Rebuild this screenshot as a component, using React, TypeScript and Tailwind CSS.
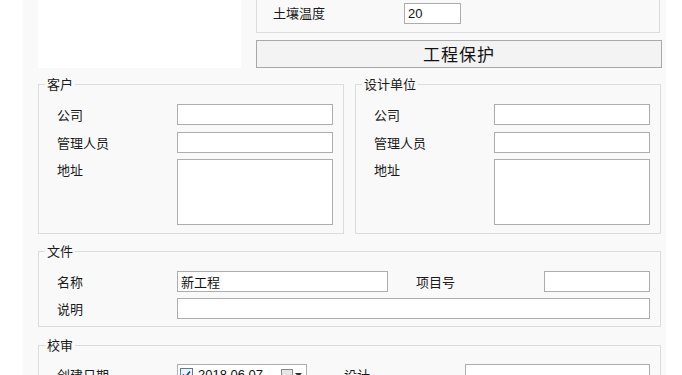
import React from "react";

const font = { fontFamily: '"Noto Sans CJK SC", "Noto Sans", sans-serif' };

function Input({ w, h = 21, value }: { w: number; h?: number; value?: string }) {
  return (
    <div
      className="bg-white border border-[#adadad] text-[13px] leading-[19px] text-[#111] pl-[3px] shrink-0"
      style={{ width: w, height: h }}
    >
      {value}
    </div>
  );
}

function Label({ children, w }: { children: React.ReactNode; w?: number }) {
  return (
    <div className="text-[13px] leading-[16px] text-[#1a1a1a] pt-[3px] shrink-0" style={w ? { width: w } : undefined}>
      {children}
    </div>
  );
}

function Group({ title, className, children }: { title: string; className?: string; children: React.ReactNode }) {
  return (
    <fieldset className={"border border-[#dcdcdc] " + (className ?? "")}>
      <legend className="-ml-[12px] px-[2px] text-[13px] leading-[16px] text-[#1a1a1a]">{title}</legend>
      {children}
    </fieldset>
  );
}

function PartyGroup({ title }: { title: string }) {
  return (
    <Group title={title} className="w-[306px] pt-[12px] pb-[8px] pl-[18px]">
      <div className="flex flex-col gap-[7px]">
        <div className="flex">
          <Label w={120}>公司</Label>
          <Input w={156} />
        </div>
        <div className="flex">
          <Label w={120}>管理人员</Label>
          <Input w={156} />
        </div>
        <div className="flex -mt-[1px]">
          <Label w={120}>地址</Label>
          <Input w={156} h={66} />
        </div>
      </div>
    </Group>
  );
}

export default function App() {
  return (
    <div className="w-[682px] h-[375px] overflow-hidden bg-white flex" style={font}>
      <div className="ml-[23px] w-[643px] h-[375px] bg-[#f9f9f9] pl-[15px] flex flex-col">
        {/* top row */}
        <div className="flex h-[68px]">
          <div className="w-[203px] h-[68px] bg-white" />
          <div className="ml-[15px] w-[405px] flex flex-col">
            <div className="h-[33px] w-[404px] border-l border-r border-b border-[#dcdcdc] flex items-start pt-[3px] pl-[16px]">
              <div className="w-[131px] text-[13px] leading-[16px] text-[#1a1a1a] pt-[2px]">土壤温度</div>
              <div className="w-[57px] h-[21px] bg-white border border-[#adadad] pl-[3px] text-[13px] leading-[19px] text-[#111]" style={{ fontFamily: '"Liberation Sans", sans-serif' }}>
                20
              </div>
            </div>
            <div className="mt-[7px] h-[28px] w-[406px] border border-[#a8a8a8] bg-[#f3f3f3] flex items-center justify-center text-[17px] leading-[20px] text-[#111] tracking-[1px]">
              工程保护
            </div>
          </div>
        </div>

        {/* customer / design unit */}
        <div className="flex gap-[11px] mt-[8px]">
          <PartyGroup title="客户" />
          <PartyGroup title="设计单位" />
        </div>

        {/* file */}
        <Group title="文件" className="mt-[9px] w-[623px] pt-[12px] pb-[7px] pl-[18px]">
          <div className="flex flex-col gap-[6px]">
            <div className="flex">
              <Label w={120}>名称</Label>
              <Input w={211} value="新工程" />
              <div className="ml-[28px]">
                <Label w={128}>项目号</Label>
              </div>
              <Input w={106} />
            </div>
            <div className="flex">
              <Label w={120}>说明</Label>
              <Input w={473} />
            </div>
          </div>
        </Group>

        {/* review */}
        <Group title="校审" className="mt-[10px] w-[623px] pt-[11px] pb-[7px] pl-[18px]">
          <div className="flex">
            <Label w={120}>创建日期</Label>
            <div className="w-[130px] h-[21px] bg-white border border-[#adadad] flex items-center pl-[2px] shrink-0">
              <div className="w-[13px] h-[13px] border border-[#5a7aa8] bg-[#eef3fb] flex items-center justify-center">
                <svg width="11" height="11" viewBox="0 0 11 11">
                  <path d="M2 5.5 L4.5 8 L9 2.5" stroke="#1f3f7a" strokeWidth="1.6" fill="none" />
                </svg>
              </div>
              <span className="ml-[5px] text-[13px] leading-[16px] text-[#111]" style={{ fontFamily: '"Liberation Sans", sans-serif' }}>
                2018.06.07
              </span>
              <div className="ml-auto mr-[4px] flex items-center gap-[2px]">
                <div className="w-[12px] h-[11px] border border-[#888] bg-[#e6e6e6]" />
                <svg width="7" height="4" viewBox="0 0 7 4">
                  <path d="M0 0 H7 L3.5 4 Z" fill="#333" />
                </svg>
              </div>
            </div>
            <div className="ml-[37px]">
              <Label w={121}>设计</Label>
            </div>
            <Input w={185} />
          </div>
        </Group>
      </div>
    </div>
  );
}
